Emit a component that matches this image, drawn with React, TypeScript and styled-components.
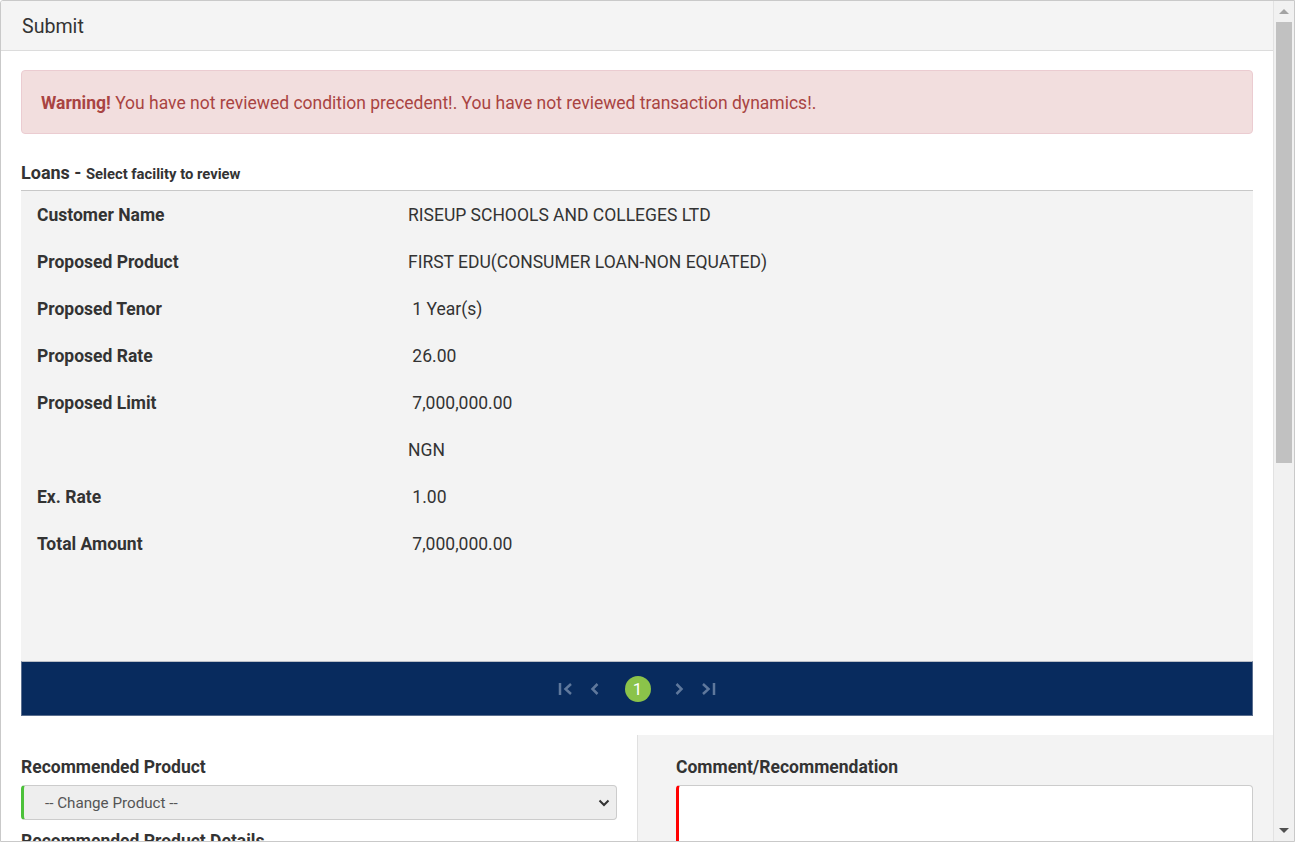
import React from "react";
import styled, { createGlobalStyle } from "styled-components";

const GlobalStyle = createGlobalStyle`
  html, body { margin: 0; padding: 0; background: #ffffff; }
  body { font-family: Roboto, "Liberation Sans", Arial, sans-serif; color: #333; }
  * { box-sizing: border-box; }
`;

const Frame = styled.div`
  width: 1295px;
  height: 842px;
  border: 1px solid #c9c9c9;
  border-top-left-radius: 3px;
  display: flex;
  overflow: hidden;
  background: #fff;
`;

const Viewport = styled.div`
  flex: 1;
  overflow: hidden;
  min-width: 0;
`;

const Scrollbar = styled.div`
  width: 21px;
  flex: none;
  background: #f1f1f1;
  border-left: 1px solid #e2e2e2;
  display: flex;
  flex-direction: column;
  align-items: center;
`;

const ArrowBtn = styled.div<{ $dir: "up" | "down" }>`
  height: 21px;
  width: 100%;
  flex: none;
  display: flex;
  align-items: center;
  justify-content: center;
  &::after {
    content: "";
    width: 0;
    height: 0;
    border-left: 5px solid transparent;
    border-right: 5px solid transparent;
    ${(p) =>
      p.$dir === "up"
        ? "border-bottom: 5px solid #a3a3a3;"
        : "border-top: 5px solid #505050;"}
  }
`;

const ThumbTrack = styled.div`
  flex: 1;
  width: 100%;
  padding: 0 2px;
`;

const Thumb = styled.div`
  height: 441px;
  background: #c1c1c1;
`;

const Header = styled.div`
  height: 50px;
  background: #f4f4f4;
  border-bottom: 1px solid #dcdcdc;
  display: flex;
  align-items: center;
  padding-left: 21px;
  padding-top: 1px;
  font-size: 19.6px;
  color: #333;
`;

const Body = styled.div`
  padding: 19px 20px 0 20px;
`;

const Alert = styled.div`
  background: #f2dede;
  border: 1px solid #ebccd1;
  border-radius: 4px;
  color: #a94442;
  font-size: 17.5px;
  line-height: 24px;
  padding: 20px 19px 18px 19px;
  strong { font-weight: 700; }
`;

const SectionTitle = styled.div`
  margin-top: 27px;
  font-size: 18px;
  font-weight: 700;
  color: #333;
  line-height: 24px;
  padding-bottom: 4px;
  border-bottom: 1px solid #c8c8c8;
  small { font-size: 14.8px; font-weight: 700; }
`;

const DetailBox = styled.div`
  background: #f3f3f3;
  min-height: 470px;
`;

const DetailRow = styled.div`
  display: grid;
  grid-template-columns: 387px 1fr;
  height: 47px;
  align-items: center;
  font-size: 17.5px;
  padding-top: 1px;
`;

const Label = styled.div`
  padding-left: 16px;
  font-weight: 700;
  color: #333;
`;

const Value = styled.div`
  white-space: pre;
  color: #333;
`;

const Pager = styled.div`
  height: 55px;
  background: #082b5e;
  border: 1px solid #5a6e8e;
  border-top-color: #b9bec6;
  display: flex;
  align-items: center;
  justify-content: center;
`;

const PagerIcon = styled.span`
  width: 29px;
  display: flex;
  justify-content: center;
  align-items: center;
  color: #5f789c;
`;

const PageDot = styled.span`
  width: 26px;
  height: 26px;
  border-radius: 50%;
  background: #8bc34a;
  color: #fff;
  font-size: 17px;
  display: flex;
  align-items: center;
  justify-content: center;
  margin: 0 14px 0 15px;
`;

const Bottom = styled.div`
  display: grid;
  grid-template-columns: 636px 1fr;
  margin-top: 19px;
  margin-left: -20px;
  margin-right: -20px;
`;

const LeftCol = styled.div`
  padding: 20px 20px 0 20px;
`;

const RightCol = styled.div`
  background: #f3f3f3;
  border-left: 1px solid #e0e0e0;
  padding: 20px 20px 0 38px;
  min-height: 120px;
`;

const FieldLabel = styled.div`
  font-size: 17.5px;
  font-weight: 700;
  line-height: 24px;
  color: #333;
  margin-bottom: 6px;
`;

const SelectBox = styled.div`
  height: 35px;
  background: #eeeeee;
  border: 1px solid #cccccc;
  border-left: 3px solid #4cc13a;
  border-radius: 4px;
  display: flex;
  align-items: center;
  justify-content: space-between;
  padding: 0 6px 0 21px;
  font-size: 15.2px;
  color: #555;
`;

const TextArea = styled.div`
  height: 80px;
  background: #fff;
  border: 1px solid #cccccc;
  border-left: 3px solid #ff0000;
  border-radius: 4px;
`;

const NextLabel = styled(FieldLabel)`
  margin-top: 9px;
`;

const FirstIcon = () => (
  <svg width="16" height="14" viewBox="0 0 16 14" fill="none" stroke="currentColor" strokeWidth="2.5">
    <line x1="2" y1="1" x2="2" y2="13" />
    <polyline points="13,2 7.5,7 13,12" />
  </svg>
);
const PrevIcon = () => (
  <svg width="10" height="14" viewBox="0 0 10 14" fill="none" stroke="currentColor" strokeWidth="2.5">
    <polyline points="7.5,2 2.5,7 7.5,12" />
  </svg>
);
const NextIcon = () => (
  <svg width="10" height="14" viewBox="0 0 10 14" fill="none" stroke="currentColor" strokeWidth="2.5">
    <polyline points="2.5,2 7.5,7 2.5,12" />
  </svg>
);
const LastIcon = () => (
  <svg width="16" height="14" viewBox="0 0 16 14" fill="none" stroke="currentColor" strokeWidth="2.5">
    <polyline points="3,2 8.5,7 3,12" />
    <line x1="14" y1="1" x2="14" y2="13" />
  </svg>
);
const ChevronDown = () => (
  <svg width="12" height="8" viewBox="0 0 12 8" fill="none" stroke="#333" strokeWidth="2">
    <polyline points="1.5,1.5 6,6 10.5,1.5" />
  </svg>
);

const rows: [string, string][] = [
  ["Customer Name", "RISEUP SCHOOLS AND COLLEGES LTD"],
  ["Proposed Product", "FIRST EDU(CONSUMER LOAN-NON EQUATED)"],
  ["Proposed Tenor", " 1 Year(s)"],
  ["Proposed Rate", " 26.00"],
  ["Proposed Limit", " 7,000,000.00"],
  ["", "NGN"],
  ["Ex. Rate", " 1.00"],
  ["Total Amount", " 7,000,000.00"],
];

export default function App() {
  return (
    <>
      <GlobalStyle />
      <Frame>
        <Viewport>
          <Header>Submit</Header>
          <Body>
            <Alert>
              <strong>Warning!</strong> You have not reviewed condition precedent!. You have not reviewed transaction dynamics!.
            </Alert>
            <SectionTitle>
              Loans - <small>Select facility to review</small>
            </SectionTitle>
            <DetailBox>
              {rows.map(([l, v], i) => (
                <DetailRow key={i}>
                  <Label>{l}</Label>
                  <Value>{v}</Value>
                </DetailRow>
              ))}
            </DetailBox>
            <Pager>
              <PagerIcon><FirstIcon /></PagerIcon>
              <PagerIcon><PrevIcon /></PagerIcon>
              <PageDot>1</PageDot>
              <PagerIcon><NextIcon /></PagerIcon>
              <PagerIcon><LastIcon /></PagerIcon>
            </Pager>
            <Bottom>
              <LeftCol>
                <FieldLabel>Recommended Product</FieldLabel>
                <SelectBox>
                  <span>-- Change Product --</span>
                  <ChevronDown />
                </SelectBox>
                <NextLabel>Recommended Product Details</NextLabel>
              </LeftCol>
              <RightCol>
                <FieldLabel>Comment/Recommendation</FieldLabel>
                <TextArea />
              </RightCol>
            </Bottom>
          </Body>
        </Viewport>
        <Scrollbar>
          <ArrowBtn $dir="up" />
          <ThumbTrack>
            <Thumb />
          </ThumbTrack>
          <ArrowBtn $dir="down" />
        </Scrollbar>
      </Frame>
    </>
  );
}
